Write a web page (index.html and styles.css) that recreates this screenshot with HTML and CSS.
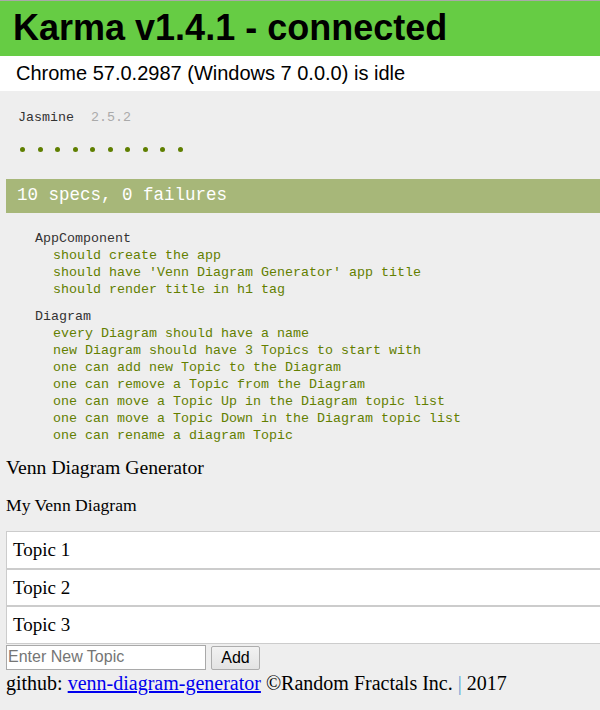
FILE: index.html
```html
<!DOCTYPE html>
<html lang="en">
<head>
<meta charset="utf-8">
<title>Karma</title>
<link rel="stylesheet" href="styles.css">
</head>
<body>
<div class="topline"></div>
<div class="banner"><h1 class="banner-title">Karma v1.4.1 - connected</h1></div>
<div class="browsers">Chrome 57.0.2987 (Windows 7 0.0.0) is idle</div>
<div class="reporter">
  <div class="jas-banner"><span class="jas-title">Jasmine</span><span class="jas-version">2.5.2</span></div>
  <ul class="dots">
    <li class="dot"></li><li class="dot"></li><li class="dot"></li><li class="dot"></li><li class="dot"></li>
    <li class="dot"></li><li class="dot"></li><li class="dot"></li><li class="dot"></li><li class="dot"></li>
  </ul>
  <div class="bar">10 specs, 0 failures</div>
  <div class="summary">
    <div class="suite">
      <div class="suite-title">AppComponent</div>
      <ul class="specs">
        <li>should create the app</li>
        <li>should have 'Venn Diagram Generator' app title</li>
        <li>should render title in h1 tag</li>
      </ul>
    </div>
    <div class="suite">
      <div class="suite-title">Diagram</div>
      <ul class="specs">
        <li>every Diagram should have a name</li>
        <li>new Diagram should have 3 Topics to start with</li>
        <li>one can add new Topic to the Diagram</li>
        <li>one can remove a Topic from the Diagram</li>
        <li>one can move a Topic Up in the Diagram topic list</li>
        <li>one can move a Topic Down in the Diagram topic list</li>
        <li>one can rename a diagram Topic</li>
      </ul>
    </div>
  </div>
</div>
<div class="app">
  <h1 class="app-title">Venn Diagram Generator</h1>
  <h2 class="diagram-name">My Venn Diagram</h2>
  <ul class="topics">
    <li class="topic">Topic 1</li>
    <li class="topic">Topic 2</li>
    <li class="topic">Topic 3</li>
  </ul>
  <div class="add-row">
    <input class="topic-input" type="text" placeholder="Enter New Topic">
    <button class="add-btn" type="button">Add</button>
  </div>
  <p class="footer">github: <a class="footer-link" href="#">venn-diagram-generator</a> ©Random Fractals Inc. <span class="sep">|</span> 2017</p>
</div>
</body>
</html>
```
FILE: styles.css
```css
html, body {
  margin: 0;
  padding: 0;
}
body {
  background: #eeeeee;
  overflow: hidden;
  height: 710px;
}
.topline {
  height: 1px;
  background: #a9a9a9;
}
.banner {
  background: #66cc44;
  height: 55px;
  padding-left: 13px;
}
.banner-title {
  margin: 0;
  font-family: "Liberation Sans", Arial, sans-serif;
  font-weight: bold;
  font-size: 36px;
  line-height: 53px;
  color: #000;
}
.browsers {
  background: #ffffff;
  height: 35px;
  padding-left: 16px;
  font-family: "Liberation Sans", Arial, sans-serif;
  font-size: 20px;
  line-height: 35px;
  color: #000;
}
.reporter {
  font-family: "Liberation Mono", monospace;
  font-size: 13.33px;
  line-height: 17px;
  color: #333;
  padding-top: 18px;
}
.jas-banner {
  padding-left: 18px;
}
.jas-version {
  margin-left: 17px;
  color: #aaaaaa;
}
.dots {
  list-style: none;
  margin: 21px 0 0 0;
  padding: 0 0 0 20px;
  display: flex;
  gap: 12.5px;
  height: 5px;
}
.dot {
  width: 5px;
  height: 5px;
  border-radius: 50%;
  background: #5f7f00;
}
.bar {
  margin: 27px 0 0 6px;
  height: 34px;
  background: #a7b779;
  color: #ffffff;
  font-size: 17.5px;
  line-height: 33px;
  padding-left: 11px;
}
.summary {
  padding-left: 35px;
  margin-top: 17px;
}
.suite {
  margin-bottom: 10px;
}
.suite-title {
  color: #333;
}
.specs {
  list-style: none;
  margin: 0;
  padding: 0 0 0 18px;
  color: #637f00;
}
.app {
  padding-left: 6px;
  font-family: "Liberation Serif", "Times New Roman", serif;
  color: #000;
}
.app-title {
  margin: 12px 0 0 0;
  font-weight: normal;
  font-size: 19.7px;
  line-height: 23px;
}
.diagram-name {
  margin: 16px 0 0 0;
  font-weight: normal;
  font-size: 17.6px;
  line-height: 20px;
}
.topics {
  list-style: none;
  margin: 16px 0 0 0;
  padding: 0;
}
.topic {
  box-sizing: border-box;
  height: 37.5px;
  border: 1px solid #cccccc;
  border-right: none;
  background: #ffffff;
  padding-left: 6px;
  font-size: 19px;
  line-height: 35px;
}
.add-row {
  display: flex;
  align-items: flex-start;
  margin-top: 1px;
  height: 26px;
}
.topic-input {
  box-sizing: border-box;
  width: 200px;
  height: 25px;
  margin: 0;
  border: 1px solid #a9a9a9;
  padding: 0 1px;
  background: #fff;
  font-family: "Liberation Sans", Arial, sans-serif;
  font-size: 16px;
  color: #000;
}
.topic-input::placeholder {
  color: #757575;
}
.add-btn {
  box-sizing: border-box;
  margin: 1px 0 0 5px;
  width: 49px;
  height: 24px;
  padding: 0;
  border: 1px solid #adadad;
  border-radius: 2px;
  background: linear-gradient(#f2f2f2, #e3e3e3);
  font-family: "Liberation Sans", Arial, sans-serif;
  font-size: 16px;
  color: #000;
}
.footer {
  margin: 1px 0 0 0;
  font-size: 20px;
  line-height: 23px;
}
.footer-link {
  color: #0000ee;
  text-decoration: underline;
}
.sep {
  color: #5a9fd4;
}
```
